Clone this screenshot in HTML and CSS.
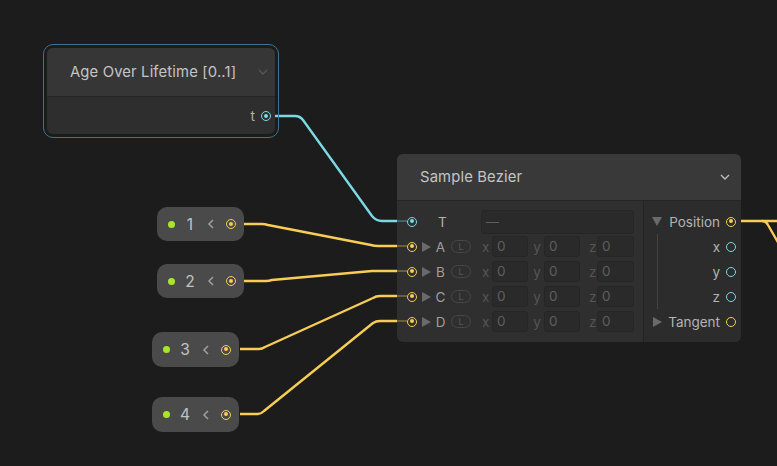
FILE: index.html
```html
<!DOCTYPE html>
<html>
<head>
<meta charset="utf-8">
<link rel="stylesheet" href="styles.css">
</head>
<body>
<div class="canvas">
  <svg class="wires" width="777" height="466" viewBox="0 0 777 466">
    <path class="w cyan" d="M275 116 H295 Q300 116 303 120 L372 216 Q376 221 382 221 H398"/>
    <path class="w yel" d="M243 224 H262 Q265 224 268 225 L371 245 Q374 246 378 246 H398"/>
    <path class="w yel" d="M244 281 H266 Q269 281 272 280 L372 271 H398"/>
    <path class="w yel" d="M240 349 H259 Q262 349 265 347 L373 298 Q376 296 380 296 H398"/>
    <path class="w yel" d="M240 414 H258 Q261 414 264 411 L373 323 Q376 321 380 321 H398"/>
    <path class="w yel" d="M740 221 H778"/>
    <path class="w yel" d="M762 221 Q766 221 768 225 L779 244"/>
  </svg>

  <div class="node n-age">
    <div class="head">
      <span class="title">Age Over Lifetime [0..1]</span>
      <svg class="chev dim" width="10" height="6" viewBox="0 0 10 6"><polyline points="1,1 5,5 9,1"/></svg>
    </div>
    <div class="body">
      <div class="out-row"><span class="olabel">t</span><span class="port cyan on"></span></div>
    </div>
  </div>

  <div class="node n-bez">
    <div class="head">
      <span class="title">Sample Bezier</span>
      <svg class="chev" width="10" height="6" viewBox="0 0 10 6"><polyline points="1,1 5,5 9,1"/></svg>
    </div>
    <div class="bbody">
      <div class="inputs">
        <div class="row">
          <span class="port cyan on in"></span>
          <span class="tlabel">T</span>
          <span class="tfield">—</span>
        </div>
        <div class="row">
          <span class="port yel on in"></span>
          <span class="tri"></span><span class="lbl">A</span><span class="badge">L</span>
          <span class="ax ax-x">x</span><span class="fld fx">0</span>
          <span class="ax ax-y">y</span><span class="fld fy">0</span>
          <span class="ax ax-z">z</span><span class="fld fz">0</span>
        </div>
        <div class="row">
          <span class="port yel on in"></span>
          <span class="tri"></span><span class="lbl">B</span><span class="badge">L</span>
          <span class="ax ax-x">x</span><span class="fld fx">0</span>
          <span class="ax ax-y">y</span><span class="fld fy">0</span>
          <span class="ax ax-z">z</span><span class="fld fz">0</span>
        </div>
        <div class="row">
          <span class="port yel on in"></span>
          <span class="tri"></span><span class="lbl">C</span><span class="badge">L</span>
          <span class="ax ax-x">x</span><span class="fld fx">0</span>
          <span class="ax ax-y">y</span><span class="fld fy">0</span>
          <span class="ax ax-z">z</span><span class="fld fz">0</span>
        </div>
        <div class="row">
          <span class="port yel on in"></span>
          <span class="tri"></span><span class="lbl">D</span><span class="badge">L</span>
          <span class="ax ax-x">x</span><span class="fld fx">0</span>
          <span class="ax ax-y">y</span><span class="fld fy">0</span>
          <span class="ax ax-z">z</span><span class="fld fz">0</span>
        </div>
      </div>
      <div class="outputs">
        <div class="orow"><span class="tri down"></span><span class="olabel">Position</span><span class="port yel on"></span></div>
        <div class="children">
          <div class="orow"><span class="olabel">x</span><span class="port cyan"></span></div>
          <div class="orow"><span class="olabel">y</span><span class="port cyan"></span></div>
          <div class="orow"><span class="olabel">z</span><span class="port cyan"></span></div>
        </div>
        <div class="orow"><span class="tri small"></span><span class="olabel tan">Tangent</span><span class="port yel"></span></div>
      </div>
    </div>
  </div>

  <div class="pill p1"><span class="dot"></span><span class="num">1</span><svg class="lt" width="8" height="10" viewBox="0 0 8 10"><polyline points="6,1 2,5 6,9"/></svg><span class="port yel on"></span></div>
  <div class="pill p2"><span class="dot"></span><span class="num">2</span><svg class="lt" width="8" height="10" viewBox="0 0 8 10"><polyline points="6,1 2,5 6,9"/></svg><span class="port yel on"></span></div>
  <div class="pill p3"><span class="dot"></span><span class="num">3</span><svg class="lt" width="8" height="10" viewBox="0 0 8 10"><polyline points="6,1 2,5 6,9"/></svg><span class="port yel on"></span></div>
  <div class="pill p4"><span class="dot"></span><span class="num">4</span><svg class="lt" width="8" height="10" viewBox="0 0 8 10"><polyline points="6,1 2,5 6,9"/></svg><span class="port yel on"></span></div>
</div>
</body>
</html>
```

FILE: styles.css
```css
* { box-sizing: border-box; }
html, body {
  margin: 0;
  padding: 0;
  background: #1c1c1c;
  overflow: hidden;
}
body {
  font-family: Inter, "Noto Sans", sans-serif;
  color: #c4c4c4;
}
.canvas {
  position: relative;
  width: 777px;
  height: 466px;
  overflow: hidden;
  background: #1c1c1c;
}
.wires {
  position: absolute;
  left: 0;
  top: 0;
  z-index: 0;
}
.w {
  fill: none;
  stroke-width: 2.4;
  stroke-linejoin: round;
  stroke-linecap: butt;
}
.w.cyan { stroke: #7bd9e4; }
.w.yel { stroke: #f7cd55; }

/* ports */
.port {
  position: relative;
  display: inline-block;
  width: 10px;
  height: 10px;
  border-radius: 50%;
  border: 1.5px solid currentColor;
  flex: none;
}
.port.cyan { color: #7bd9e4; }
.port.yel { color: #f7cd55; }
.port.on::after {
  content: "";
  position: absolute;
  left: 1.5px;
  top: 1.5px;
  width: 4px;
  height: 4px;
  border-radius: 50%;
  background: currentColor;
}
.port.in::before {
  content: "";
  position: absolute;
  right: 9px;
  top: 2.8px;
  width: 12px;
  height: 2px;
  background: currentColor;
  opacity: 0.3;
}

/* nodes */
.node {
  position: absolute;
  z-index: 1;
  border-radius: 6px;
  overflow: visible;
}
.node .head {
  display: flex;
  align-items: center;
  justify-content: space-between;
  background: #393939;
  border-bottom: 1px solid #262626;
  border-radius: 6px 6px 0 0;
}
.title {
  font-size: 14.8px;
  color: #c4c4c4;
  letter-spacing: 0.15px;
}
.chev polyline {
  fill: none;
  stroke: #bdbdbd;
  stroke-width: 1.4;
}
.chev.dim polyline { stroke: #555; }

.n-age {
  left: 47px;
  top: 48px;
  width: 228px;
  height: 86px;
  outline: 1px solid #3a7590;
  outline-offset: 3px;
  background: #2e2e2e;
}
.n-age .head {
  height: 49px;
  padding: 0 7px 0 23px;
  background: #363636;
}
.n-age .body {
  padding-top: 12px;
}
.out-row {
  display: flex;
  align-items: center;
  justify-content: flex-end;
  height: 14px;
  padding-right: 4px;
  gap: 6px;
}
.olabel {
  font-size: 13.5px;
  color: #b3b3b3;
}

.n-bez {
  left: 397px;
  top: 154px;
  width: 344px;
  height: 188px;
  background: #2f2f2f;
}
.n-bez .head {
  height: 47px;
  padding: 0 11px 0 23px;
}
.bbody {
  display: flex;
  height: 141px;
}
.inputs {
  width: 247px;
  padding-top: 8px;
  border-right: 1px solid #242424;
}
.outputs {
  flex: 1;
  padding-top: 8px;
  padding-right: 5px;
  background: #2c2c2c;
  border-radius: 0 0 6px 0;
}
.row {
  display: flex;
  align-items: center;
  height: 25px;
  padding-left: 10px;
}
.tlabel {
  margin-left: 21px;
  width: 7px;
  font-size: 13.5px;
  color: #b3b3b3;
}
.tfield {
  margin-left: 36px;
  width: 153px;
  height: 24px;
  background: #2a2a2a;
  border-radius: 3px;
  border: 1px solid #262626;
  color: #5e5e5e;
  font-size: 13px;
  padding-left: 4px;
  line-height: 22px;
}
.tri {
  margin-left: 5px;
  width: 0;
  height: 0;
  border-top: 5px solid transparent;
  border-bottom: 5px solid transparent;
  border-left: 9px solid #6a6a6a;
}
.lbl {
  margin-left: 4px;
  width: 11px;
  text-align: center;
  font-size: 13.5px;
  color: #9e9e9e;
}
.badge {
  margin-left: 5px;
  width: 20px;
  height: 13px;
  border: 1px solid #474747;
  border-radius: 7px;
  font-size: 9px;
  line-height: 11px;
  text-align: center;
  color: #555;
}
.ax {
  font-size: 13.5px;
  color: #555;
  width: 7px;
  text-align: center;
}
.ax-x { margin-left: 11px; }
.ax-y { margin-left: 5px; width: 8px; }
.ax-z { margin-left: 9px; }
.fld {
  margin-left: 3px;
  width: 36px;
  height: 21px;
  background: #2a2a2a;
  border: 1px solid #262626;
  border-radius: 3px;
  font-size: 13.5px;
  line-height: 19px;
  padding-left: 4px;
  color: #5e5e5e;
}
.fz { margin-left: 1px; width: 37px; }

.orow {
  display: flex;
  align-items: center;
  justify-content: flex-end;
  height: 25px;
  gap: 6px;
}
.tri.down {
  margin: 0 0 0 8px;
  margin-right: auto;
  border-left: 5px solid transparent;
  border-right: 5px solid transparent;
  border-top: 9px solid #6a6a6a;
  border-bottom: 0;
}
.tri.small {
  margin-left: 9px;
  margin-right: auto;
}
.children {
  margin-left: 13px;
  border-left: 1px solid #444;
}

/* pills */
.pill {
  position: absolute;
  z-index: 1;
  display: flex;
  align-items: center;
  height: 34px;
  width: 87px;
  padding-left: 11px;
  background: #4a4a4a;
  border-radius: 10px;
}
.p1 { left: 157px; top: 207px; }
.p2 { left: 157px; top: 264px; }
.p3 { left: 152px; top: 332px; height: 35px; }
.p4 { left: 152px; top: 397px; height: 35px; }
.dot {
  width: 7px;
  height: 7px;
  border-radius: 50%;
  background: #a8e62a;
}
.num {
  margin-left: 10px;
  width: 10px;
  text-align: center;
  font-size: 15.5px;
  color: #c2c2c2;
}
.lt {
  margin-left: 12px;
}
.lt polyline {
  fill: none;
  stroke: #a0a0a0;
  stroke-width: 1.5;
}
.pill .port {
  margin-left: 11px;
}
```
